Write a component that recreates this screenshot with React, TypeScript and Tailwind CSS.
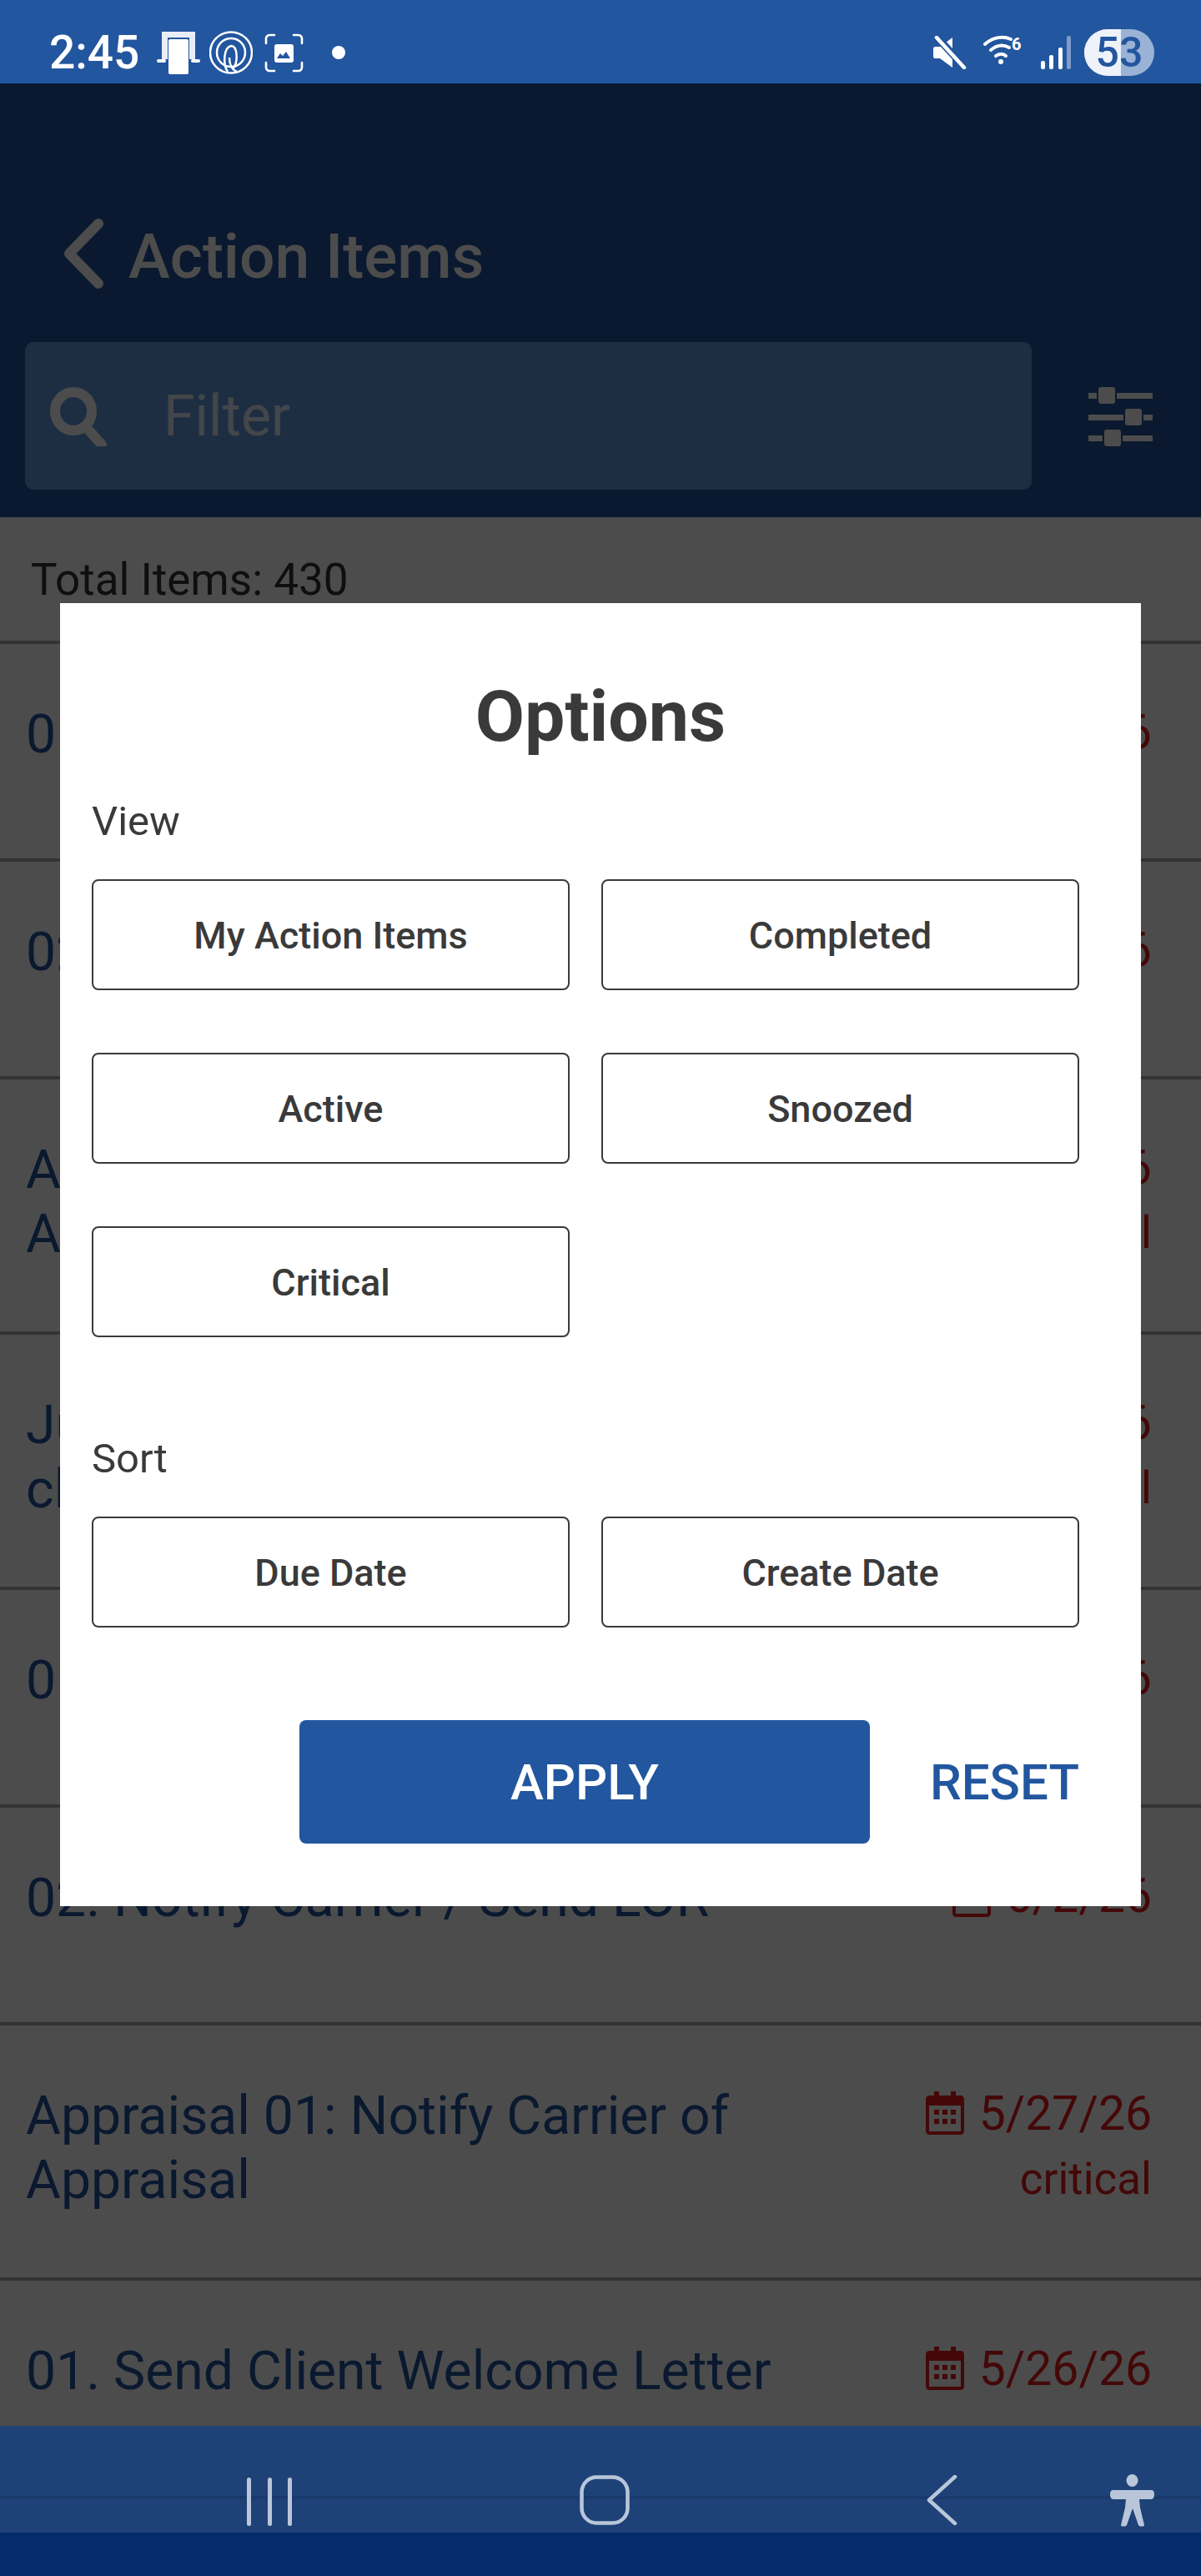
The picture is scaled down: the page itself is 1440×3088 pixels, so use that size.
const font = "font-['Roboto',sans-serif]";

type Row = { title: string[]; date: string; critical?: boolean };

const ROWS: Row[] = [
  { title: ['01. Send Client Welcome Letter'], date: '6/5/26' },
  { title: ['02. Notify Carrier / Send LOR'], date: '6/5/26' },
  { title: ['Appraisal 01: Notify Carrier of', 'Appraisal'], date: '6/5/26', critical: true },
  { title: ['Jumbo 01: Notify carrier of', 'closing'], date: '6/5/26', critical: true },
  { title: ['01. Send Client Welcome Letter'], date: '6/2/26' },
  { title: ['02. Notify Carrier / Send LOR'], date: '6/2/26' },
  { title: ['Appraisal 01: Notify Carrier of', 'Appraisal'], date: '5/27/26', critical: true },
  { title: ['01. Send Client Welcome Letter'], date: '5/26/26' },
];

function CalendarIcon() {
  return (
    <svg viewBox="0 0 46 52" className="w-[46px] h-[52px] shrink-0" fill="#e51c1c">
      <path
        fillRule="evenodd"
        d="M10 0h6v5h14V0h6v5h6c2 0 4 2 4 4v39c0 2-2 4-4 4H4c-2 0-4-2-4-4V9c0-2 2-4 4-4h6V0zM4 17v31h38V17H4z"
      />
      <rect x="10" y="22" width="6" height="6" />
      <rect x="20" y="22" width="6" height="6" />
      <rect x="30" y="22" width="6" height="6" />
      <rect x="10" y="33" width="6" height="6" />
      <rect x="20" y="33" width="6" height="6" />
      <rect x="30" y="33" width="6" height="6" />
    </svg>
  );
}

function StatusBar() {
  return (
    <div className="h-[100px] shrink-0 bg-[#22569f] flex items-center pl-[59px] pr-[56px] pt-[26px] text-white">
      <span className="text-[55px] font-medium leading-none w-[129px]">2:45</span>
      <svg viewBox="0 0 52 52" className="w-[52px] h-[52px]" fill="white">
        <path d="M6 1h40v33h-7V8H13v26H6z" opacity="0.9" />
        <rect x="14" y="10" width="24" height="42" rx="2" />
        <rect x="0" y="34" width="11" height="4" rx="2" />
        <rect x="41" y="34" width="11" height="4" rx="2" />
      </svg>
      <svg viewBox="0 0 52 52" className="w-[52px] h-[52px] ml-[11px]" fill="none" stroke="white" strokeWidth="2.5">
        <ellipse cx="26" cy="26" rx="25" ry="24.5" />
        <ellipse cx="26" cy="26" rx="17" ry="17" />
        <path d="M22 49C16 40 17 20 26 18c8 0 9 20 2 28" />
        <path d="M33 49c-5-2-9-8-9-17" />
      </svg>
      <svg viewBox="0 0 47 47" className="w-[47px] h-[47px] ml-[14px]" fill="none" stroke="white" strokeWidth="2.6" strokeLinecap="round">
        <path d="M2 12V6c0-2 2-4 4-4h6M35 2h6c2 0 4 2 4 4v6M45 35v6c0 2-2 4-4 4h-6M12 45H6c-2 0-4-2-4-4v-6" />
        <rect x="12" y="13" width="23" height="22" rx="3" fill="white" stroke="none" />
        <path d="M15 30l4-6 3 3 4-5 5 8z" fill="#22569f" stroke="none" />
      </svg>
      <span className="w-4 h-4 rounded-full bg-white ml-[34px]" />
      <div className="flex-1" />
      <svg viewBox="0 0 40 40" className="w-[40px] h-[40px]" fill="white">
        <path d="M0 15c0-1 1-2 2-2h6l15-11v36L8 27H2c-1 0-2-1-2-2z" />
        <path d="M4 1l34 37" stroke="#22569f" strokeWidth="9" />
        <path d="M4 2l33 36" stroke="white" strokeWidth="4.5" strokeLinecap="round" />
      </svg>
      <svg viewBox="0 0 47 36" className="w-[47px] h-[36px] ml-[20px] -mt-[6px]" fill="none" stroke="white" strokeLinecap="round">
        <path d="M2 11C12 2 24 1 33 5" strokeWidth="4" />
        <path d="M9 18c7-6 15-7 22-3" strokeWidth="4" />
        <path d="M15 25c4-3 9-3 12 0" strokeWidth="4" />
        <circle cx="21" cy="32" r="2" fill="white" strokeWidth="2" />
        <text x="34" y="18" fontSize="20" fontWeight="700" fill="white" stroke="none">6</text>
      </svg>
      <svg viewBox="0 0 36 40" className="w-[36px] h-[40px] ml-[22px]">
        <rect x="0" y="30" width="5" height="10" rx="2" fill="white" />
        <rect x="10" y="23" width="5" height="17" rx="2" fill="white" />
        <rect x="21" y="14" width="5" height="26" rx="2" fill="white" />
        <rect x="31" y="0" width="5" height="40" rx="2" fill="#7f9bc9" />
      </svg>
      <div className="relative ml-[16px] w-[84px] h-[56px] rounded-full bg-[#99b2d6] overflow-hidden flex items-center justify-center">
        <div className="absolute inset-y-0 left-0 w-[44px] bg-[#eef2f9]" />
        <span className="relative text-[50px] font-medium leading-none text-[#22569f]">53</span>
      </div>
    </div>
  );
}

function NavBar() {
  return (
    <div className="shrink-0 text-[#b9c6da]">
      <div className="relative h-[128px] bg-[#1e4277] flex items-start pt-[59px]">
        <div className="absolute left-0 right-0 top-[84px] h-[4px] bg-[#1a3a6e]" />
        <svg viewBox="0 0 54 58" className="relative ml-[296px] mt-[3px] w-[54px] h-[58px]" fill="currentColor">
          <rect x="0" y="0" width="5" height="58" rx="2.5" />
          <rect x="25" y="0" width="5" height="58" rx="2.5" />
          <rect x="49" y="0" width="5" height="58" rx="2.5" />
        </svg>
        <svg viewBox="0 0 60 60" className="relative ml-[345px] w-[60px] h-[60px]" fill="none" stroke="currentColor" strokeWidth="4.5">
          <rect x="2.5" y="2.5" width="55" height="55" rx="18" />
        </svg>
        <svg viewBox="0 0 37 60" className="relative ml-[356px] w-[37px] h-[60px]" fill="none" stroke="currentColor" strokeWidth="4.5" strokeLinecap="round" strokeLinejoin="round">
          <path d="M34 2L3 30l31 28" />
        </svg>
        <svg viewBox="0 0 53 63" className="relative ml-[183px] -mt-[1px] w-[53px] h-[63px]" fill="currentColor">
          <ellipse cx="26.5" cy="7.5" rx="7" ry="7.5" />
          <path d="M4 19h45c3 0 4 2 4 5s-1 6-4 6H35l1 10 5 21c0 2-6 2-7 0l-7-20-7 20c-1 2-7 2-7 0l5-21 1-10H4c-3 0-4-3-4-6s1-5 4-5z" />
        </svg>
      </div>
      <div className="h-[52px] bg-[#042b6b]" />
    </div>
  );
}

function OptionButton({ label }: { label: string }) {
  return (
    <div className="h-[133px] flex items-center justify-center pt-[2px] border-2 border-[#3a3a3a] rounded-[8px] text-[45px] font-medium text-[#3a3a3a] bg-white">
      {label}
    </div>
  );
}

function OptionsModal() {
  return (
    <div className="w-[1296px] h-[1562px] bg-white pl-[38px] pr-[74px] text-[#3a3a3a]">
      <h2 className="text-[86px] font-bold leading-none text-center pl-[36px] pt-[93px]">Options</h2>
      <p className="text-[49px] leading-none mt-[58px]">View</p>
      <div className="grid grid-cols-2 gap-x-[38px] gap-y-[75px] mt-[45px]">
        <OptionButton label="My Action Items" />
        <OptionButton label="Completed" />
        <OptionButton label="Active" />
        <OptionButton label="Snoozed" />
        <OptionButton label="Critical" />
      </div>
      <p className="text-[49px] leading-none mt-[121px]">Sort</p>
      <div className="grid grid-cols-2 gap-x-[38px] mt-[45px]">
        <OptionButton label="Due Date" />
        <OptionButton label="Create Date" />
      </div>
      <div className="flex items-center mt-[111px]">
        <button className="ml-[249px] w-[684px] h-[148px] pt-[2px] bg-[#22569f] rounded-[8px] text-white text-[60px] font-medium">
          APPLY
        </button>
        <span className="ml-[72px] pt-[2px] text-[60px] font-medium text-[#22569f] leading-none">RESET</span>
      </div>
    </div>
  );
}

export default function App() {
  return (
    <div className={`${font} w-[1440px] h-[3088px] flex flex-col overflow-hidden bg-white`}>
      <StatusBar />
      <main className="relative flex-1 overflow-hidden">
        <header className="h-[520px] bg-[#22569f] px-[30px] text-white">
          <div className="flex items-center h-[310px] pl-[46px] pt-[98px]">
            <svg viewBox="0 0 48 84" className="w-[48px] h-[84px]" fill="none" stroke="white" strokeWidth="12" strokeLinecap="round" strokeLinejoin="round">
              <path d="M42 6L7 42l35 36" />
            </svg>
            <span className="ml-[30px] pt-[6px] text-[75px] font-medium leading-none">Action Items</span>
          </div>
          <div className="flex items-start">
            <div className="w-[1207px] h-[177px] rounded-[10px] bg-[#6499dc] flex items-center pl-[30px] text-white">
              <svg viewBox="0 0 70 72" className="w-[70px] h-[72px]" fill="none" stroke="white" strokeWidth="12">
                <ellipse cx="28" cy="30" rx="22" ry="23" />
                <path d="M44 50l18 20" strokeLinecap="round" />
              </svg>
              <span className="ml-[66px] text-[68px] leading-none opacity-80">Filter</span>
            </div>
            <svg viewBox="0 0 77 72" className="ml-[68px] mt-[54px] w-[77px] h-[72px]" fill="white">
              <rect x="0" y="7" width="77" height="7" />
              <rect x="0" y="33" width="77" height="7" />
              <rect x="0" y="58" width="77" height="7" />
              <rect x="10" y="0" width="24" height="21" fill="#22569f" />
              <rect x="42" y="26" width="24" height="21" fill="#22569f" />
              <rect x="17" y="51" width="24" height="21" fill="#22569f" />
              <rect x="12" y="0" width="20" height="20" rx="3" />
              <rect x="44" y="26" width="20" height="20" rx="3" />
              <rect x="19" y="51" width="20" height="20" rx="3" />
            </svg>
          </div>
        </header>

        <div className="h-[148px] pl-[37px] pt-[49px] text-[53px] leading-none text-[#333]">Total Items: 430</div>

        {ROWS.map((row, i) => (
          <div key={i} className="flex justify-between min-h-[261px] border-t-[4px] border-[#aaaaaa] pl-[31px] pr-[59px] pt-[70px] pb-[78px]">
            <div className="text-[64.25px] leading-[77px] text-[#22569f]">
              {row.title.map((line) => (
                <div key={line}>{line}</div>
              ))}
            </div>
            <div className="flex flex-col items-end text-[#e51c1c] text-[57px]">
              <div className="flex items-center gap-[18px] h-[70px] leading-none">
                <CalendarIcon />
                <span>{row.date}</span>
              </div>
              {row.critical && <span className="text-[53px] leading-[79px] mt-[5px]">critical</span>}
            </div>
          </div>
        ))}

        <div className="absolute inset-0 bg-black/70 flex justify-center pt-[623px]">
          <OptionsModal />
        </div>
      </main>
      <NavBar />
    </div>
  );
}
